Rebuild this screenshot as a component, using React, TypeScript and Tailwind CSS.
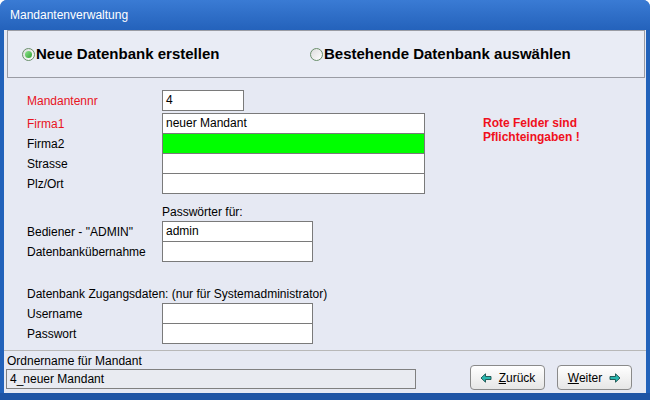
import type { ReactNode } from 'react';

function Radio({ checked }: { checked?: boolean }) {
  return (
    <span className="flex h-[13px] w-[13px] shrink-0 items-center justify-center rounded-full border border-[#6a8f6a] bg-gradient-to-br from-[#dcdcdc] to-white">
      {checked && <span className="h-[7px] w-[7px] rounded-full bg-gradient-to-br from-[#8ee68e] to-[#2ea02e]" />}
    </span>
  );
}

function Field({ value, className = '', bg = 'bg-white' }: { value?: string; className?: string; bg?: string }) {
  return (
    <div className={`h-[21px] shrink-0 border border-[#7a7a7a] ${bg} px-[3px] text-[12px] leading-[19px] text-black ${className}`}>
      {value}
    </div>
  );
}

function Row({ label, red, children, className = '' }: { label: string; red?: boolean; children: ReactNode; className?: string }) {
  return (
    <div className={`flex items-center ${className}`}>
      <span className={`w-[158px] shrink-0 whitespace-nowrap pl-[23px] text-[12px] ${red ? 'text-[#e8141e]' : 'text-black'}`}>{label}</span>
      {children}
    </div>
  );
}

function Arrow({ dir }: { dir: 'left' | 'right' }) {
  return (
    <svg width="12" height="10" viewBox="0 0 12 10" className={dir === 'right' ? '' : 'rotate-180'}>
      <path d="M1 3.5h5.5V0.8L11 5l-4.5 4.2V6.5H1z" fill="#2ab8b0" stroke="#1a4f4c" strokeWidth="0.9" strokeLinejoin="round" />
    </svg>
  );
}

export default function App() {
  return (
    <div
      className="flex h-[400px] w-[650px] flex-col overflow-hidden rounded-t-[7px] bg-[#2262ba] text-black"
      style={{ fontFamily: '"Liberation Sans", Arial, sans-serif' }}
    >
      {/* Title bar */}
      <div className="flex h-[30px] shrink-0 items-center bg-gradient-to-b from-[#3a7bd4] to-[#2462bb] pl-[10px] text-[12px] text-white">
        Mandantenverwaltung
      </div>

      <div className="mx-[4px] flex flex-1 flex-col bg-[#e6e9f3]">
        {/* Radio panel */}
        <div className="ml-[3px] mr-px flex h-[48px] shrink-0 items-center border border-[#9a9ca4] bg-[#e9ecf5] pl-[14px] text-[15px] font-bold">
          <label className="flex w-[288px] items-center gap-px">
            <Radio checked />
            <span>Neue Datenbank erstellen</span>
          </label>
          <label className="flex items-center gap-px">
            <Radio />
            <span>Bestehende Datenbank auswählen</span>
          </label>
        </div>

        {/* Form */}
        <div className="flex flex-1 pt-[12px]">
          <div className="flex w-[421px] shrink-0 flex-col">
            <Row label="Mandantennr" red>
              <Field value="4" className="w-[82px]" />
            </Row>
            <div className="mt-[2px]">
              <Row label="Firma1" red>
                <Field value="neuer Mandant" className="w-[263px]" />
              </Row>
              <Row label="Firma2" className="-mt-px">
                <Field className="w-[263px]" bg="bg-[#00ff00]" />
              </Row>
              <Row label="Strasse" className="-mt-px">
                <Field className="w-[263px]" />
              </Row>
              <Row label="Plz/Ort" className="-mt-px">
                <Field className="w-[263px]" />
              </Row>
            </div>

            <div className="mt-[11px] pl-[158px] text-[12px] leading-[14px]">Passwörter für:</div>
            <div className="mt-[2px]">
              <Row label={'Bediener - "ADMIN"'}>
                <Field value="admin" className="w-[151px]" />
              </Row>
              <Row label="Datenbankübernahme" className="-mt-px">
                <Field className="w-[151px]" />
              </Row>
            </div>

            <div className="mt-[25px] whitespace-nowrap pl-[23px] text-[12px] leading-[14px]">
              Datenbank Zugangsdaten: (nur für Systemadministrator)
            </div>
            <div className="mt-[2px]">
              <Row label="Username">
                <Field className="w-[151px]" />
              </Row>
              <Row label="Passwort" className="-mt-px">
                <Field className="w-[151px]" />
              </Row>
            </div>
          </div>
          <div className="pl-[58px] pt-[26px] text-[12px] font-bold leading-[14px] text-[#f0101c]">
            Rote Felder sind
            <br />
            Pflichteingaben !
          </div>
        </div>

        {/* Bottom */}
        <div className="flex h-[43px] shrink-0 items-start border-t border-[#b8b8b8] pl-[2px] pr-[14px] pt-[2px]">
          <div className="flex flex-col">
            <span className="pl-px text-[12px] leading-[16px]">Ordnername für Mandant</span>
            <div className="h-[20px] w-[410px] border border-[#808080] bg-[#e9ebf1] pl-[3px] text-[12px] leading-[18px]">
              4_neuer Mandant
            </div>
          </div>
          <div className="ml-auto mt-[12px] flex gap-[12px]">
            <button className="flex h-[25px] w-[75px] items-center justify-center gap-[7px] rounded-[4px] border border-[#8a8a8a] bg-gradient-to-b from-white to-[#e6e6e6] text-[12px]">
              <Arrow dir="left" />
              <span>
                <span className="underline">Z</span>urück
              </span>
            </button>
            <button className="flex h-[25px] w-[75px] items-center justify-center gap-[7px] rounded-[4px] border border-[#8a8a8a] bg-gradient-to-b from-white to-[#e6e6e6] text-[12px]">
              <span>
                <span className="underline">W</span>eiter
              </span>
              <Arrow dir="right" />
            </button>
          </div>
        </div>
      </div>
      <div className="h-[7px] shrink-0 bg-[#1f55a5]" />
    </div>
  );
}
